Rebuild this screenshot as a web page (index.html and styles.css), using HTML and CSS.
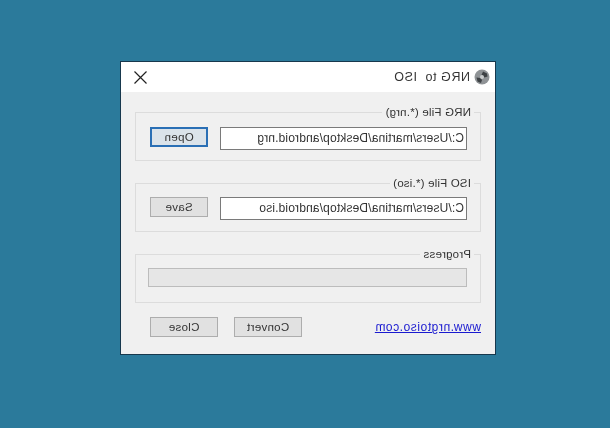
FILE: index.html
```html
<!DOCTYPE html>
<html lang="en">
<head>
  <meta charset="UTF-8">
  <title>NRG to ISO</title>
  <link rel="stylesheet" href="styles.css">
</head>
<body>
  <div class="window">
    <div class="titlebar">
      <svg class="app-icon" width="16" height="16" viewBox="0 0 16 16">
        <circle cx="8" cy="8" r="7.5" fill="#8f9396"/>
        <path d="M3 4.5 7 2.5 8.5 6 5.5 8.5 2.5 7.5Z" fill="#3d4144"/>
        <path d="M9.5 9 13.5 8.5 12.5 12.5 9 14 8 11Z" fill="#3d4144"/>
        <circle cx="8" cy="8" r="2" fill="#c9cccd"/>
      </svg>
      <span class="title">NRG to  ISO</span>
      <svg class="close-icon" width="13" height="13" viewBox="0 0 13 13">
        <path d="M0.5 0.5 12.5 12.5M12.5 0.5 0.5 12.5" stroke="#222" stroke-width="1.2" fill="none"/>
      </svg>
    </div>
    <div class="content">
      <fieldset class="group">
        <legend>NRG File (*.nrg)</legend>
        <div class="row">
          <div class="path-input">C:/Users/martina/Desktop/android.nrg</div>
          <div class="btn btn-small btn-default">Open</div>
        </div>
      </fieldset>
      <fieldset class="group">
        <legend>ISO File (*.iso)</legend>
        <div class="row">
          <div class="path-input">C:/Users/martina/Desktop/android.iso</div>
          <div class="btn btn-small">Save</div>
        </div>
      </fieldset>
      <fieldset class="group">
        <legend>Progress</legend>
        <div class="progress"></div>
      </fieldset>
      <div class="footer">
        <a class="site-link" href="#">www.nrgtoiso.com</a>
        <div class="footer-buttons">
          <div class="btn">Convert</div>
          <div class="btn">Close</div>
        </div>
      </div>
    </div>
  </div>
</body>
</html>
```

FILE: styles.css
```css
body {
  margin: 0;
  height: 428px;
  overflow: hidden;
  background-color: #2b7a9b;
  font-family: "Liberation Sans", Arial, sans-serif;
  font-size: 11.5px;
  color: #333;
  padding: 61px 0 0 120px;
  box-sizing: border-box;
}

/* the whole screenshot is flipped horizontally */
.window {
  width: 376px;
  height: 294px;
  box-sizing: border-box;
  border: 1px solid #17384d;
  background-color: #f0f0f0;
  transform: scaleX(-1);
  filter: blur(0.3px);
}
.titlebar {
  display: flex;
  align-items: center;
  height: 30px;
  padding: 0 13px 0 5px;
  background-color: #fff;
  font-size: 12.5px;
}
.app-icon {
  flex: none;
  margin-right: 4px;
}
.title {
  flex: 1;
  white-space: pre;
  letter-spacing: 0.55px;
}
.close-icon {
  flex: none;
}
.content {
  padding: 13px 14px 0 14px;
}
.group {
  margin: 0 0 15px 0;
  padding: 7px 13px 0 13px;
  height: 56px;
  box-sizing: border-box;
  border: 1px solid #dcdcdc;
  min-width: 0;
}
.group:first-child {
  padding-top: 8px;
}
.group legend {
  padding: 0 3px;
  margin-left: -7px;
  line-height: 14px;
  letter-spacing: 0.2px;
}
.row {
  display: flex;
  align-items: flex-start;
  gap: 12px;
}
.path-input {
  width: 247px;
  height: 23px;
  box-sizing: border-box;
  border: 1px solid #7a7a7a;
  background-color: #fff;
  padding-left: 2px;
  line-height: 21px;
  font-size: 12px;
  letter-spacing: 0.15px;
  white-space: nowrap;
}
.btn {
  width: 68px;
  height: 20px;
  box-sizing: border-box;
  border: 1px solid #adadad;
  background-color: #e1e1e1;
  text-align: center;
  line-height: 18px;
  letter-spacing: 0.3px;
}
.btn-small {
  width: 58px;
}
.btn-default {
  border: 2px solid #2a6fb5;
  background-color: #dbe3ea;
  line-height: 16px;
}
.progress {
  height: 19px;
  box-sizing: border-box;
  border: 1px solid #bcbcbc;
  background-color: #e6e6e6;
  margin-right: -1px;
}
.footer {
  display: flex;
  align-items: center;
  justify-content: space-between;
  margin-top: -1px;
  padding-right: 15px;
  height: 20px;
}
.footer-buttons {
  display: flex;
  gap: 16px;
}
.site-link {
  color: #1a1ad0;
  text-decoration: underline;
  font-size: 12px;
  letter-spacing: 0.55px;
}
```
